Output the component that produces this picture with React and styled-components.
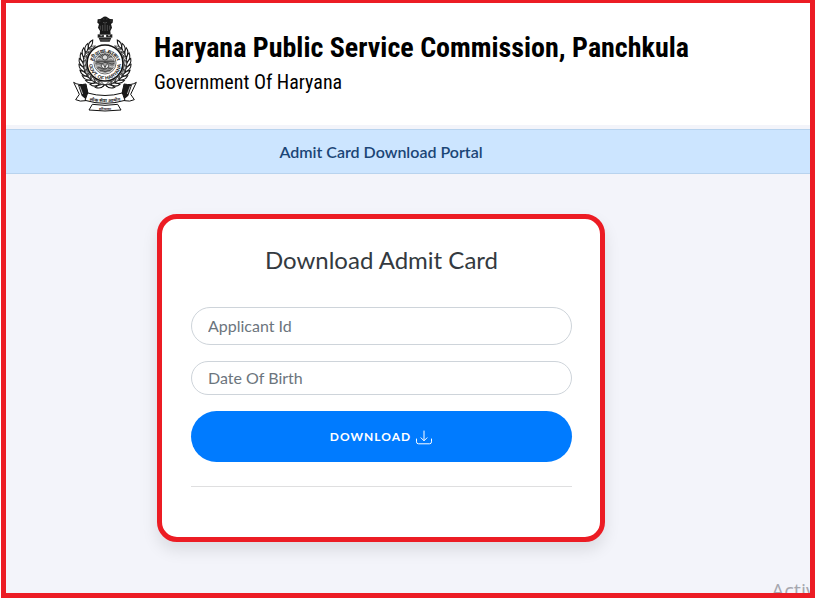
import React, { useState } from 'react';
import styled, { createGlobalStyle } from 'styled-components';

const GlobalStyle = createGlobalStyle`
  *,
  *::before,
  *::after {
    box-sizing: border-box;
  }

  body {
    margin: 0;
    background: #fff;
    font-family: Lato, sans-serif;
    font-size: 16px;
    line-height: 24px;
    color: #343a40;
  }
`;

const Frame = styled.div`
  position: relative;
  display: flex;
  flex-direction: column;
  min-height: calc(100vh - 1px);
  margin: 0 0 1px 1px;
  border: 5px solid #ec1c24;
  border-top-width: 3px;
  background: #f3f4fa;
  overflow: hidden;
`;

const Header = styled.header`
  display: flex;
  align-items: flex-start;
  gap: 17px;
  padding: 13px 67px;
  background: #fff;
`;

const Emblem = styled.svg`
  flex: none;
  width: 64px;
  height: 96px;
`;

const Titles = styled.div`
  padding-top: 14px;
  font-family: 'Roboto Condensed', Roboto, 'Liberation Sans Narrow', sans-serif;
  color: #000;
`;

const SiteName = styled.h1`
  margin: 0;
  font-size: 28px;
  font-weight: 700;
  line-height: 36px;
`;

const Government = styled.p`
  margin: 0;
  font-size: 20px;
  line-height: 32px;
`;

const Banner = styled.div`
  margin-top: 4px;
  padding: 10px 54px 9px 0;
  border: 1px solid #b8d3ee;
  border-width: 1px 0;
  background: #cce5ff;
  color: #1b4676;
  font-weight: 600;
  text-align: center;
`;

const Main = styled.main`
  display: flex;
  justify-content: center;
  padding: 40px 54px 51px 0;
`;

const Card = styled.form`
  width: 100%;
  max-width: 448px;
  padding: 23px 28px 50px 29px;
  border: 5px solid #ec1c24;
  border-radius: 20px;
  background: #fff;
  box-shadow: 0 8px 16px rgba(0, 0, 0, 0.1);
`;

const CardTitle = styled.h2`
  margin: 0 0 29px;
  font-size: 24px;
  font-weight: 400;
  line-height: 36px;
  text-align: center;
`;

const Field = styled.input`
  display: block;
  width: 100%;
  height: ${(props) => (props.$compact ? '34px' : '38px')};
  margin-bottom: 16px;
  padding: 0 16px 2px;
  border: 1px solid #ced4da;
  border-radius: 32px;
  background: #fff;
  color: #495057;
  font: inherit;
  outline: none;

  &::placeholder {
    color: #6c757d;
    opacity: 1;
  }

  &:focus {
    border-color: #80bdff;
  }
`;

const DownloadButton = styled.button`
  display: flex;
  align-items: center;
  justify-content: center;
  gap: 4px;
  width: 100%;
  height: 51px;
  border: none;
  border-radius: 80px;
  background: #007bff;
  color: #fff;
  font-family: inherit;
  font-size: 12px;
  font-weight: 700;
  letter-spacing: 1px;
  text-transform: uppercase;
  cursor: pointer;

  &:hover {
    background: #0069d9;
  }
`;

const Divider = styled.hr`
  margin: 24px 0 0;
  border: none;
  border-top: 1px solid #dfdfe0;
`;

const Watermark = styled.span`
  position: absolute;
  right: -6px;
  bottom: -12px;
  color: #a6a7ae;
  font-family: 'Open Sans', sans-serif;
  font-size: 20px;
  line-height: 28px;
`;

// half of the wreath, the other half is mirrored
const leaves = Array.from({ length: 11 }, (_, i) => 82 - i * 13);

const Branch = () => (
  <g>
    <path d="M137 244 A68 68 0 0 0 174 118" fill="none" stroke="#111" strokeWidth="2" />
    {leaves.map((angle) => (
      <g key={angle} transform={`rotate(${angle} 134 174)`}>
        <path d="M199 182 Q197 166 210 155 Q215 172 199 182Z" fill="#fff" stroke="#111" strokeWidth="3" />
        <path d="M199 180 Q189 174 191 161 Q200 168 199 180Z" fill="#fff" stroke="#111" strokeWidth="2" />
      </g>
    ))}
  </g>
);

const StateEmblem = () => (
  <Emblem viewBox="38 33 192 288" role="img" aria-label="Haryana emblem">
    <Branch />
    <g transform="translate(268 0) scale(-1 1)">
      <Branch />
    </g>

    {/* lion capital */}
    <path
      d="M126 38 Q134 31 143 38 L149 42 L158 43 L157 53 L152 57 L155 68 L150 78 L151 88 H118 L119 78 L113 68 L116 57 L111 53 L112 43 L120 42Z"
      fill="#181818"
    />
    <path d="M129 42h3M138 42h3M116 48h4M150 48h4M128 52q6 5 12 0M127 60v18M134 58v20M141 60v18M120 62v12M148 62v12" stroke="#888" strokeWidth="1.4" fill="none" />
    <path d="M112 88h44v10h-44z" fill="#222" />
    <circle cx="134" cy="93" r="4" fill="#fff" />
    <path d="M120 92h6M143 92h6" stroke="#fff" strokeWidth="2" />
    <path d="M115 99h38l-5 11h-28z" fill="#222" />
    <path d="M122 102v5M128 102v6M134 102v6M140 102v6M146 102v5" stroke="#aaa" strokeWidth="1.5" />

    <circle cx="134" cy="174" r="54" fill="#fff" stroke="#111" strokeWidth="5" />
    <circle cx="134" cy="174" r="33" fill="#fff" stroke="#222" strokeWidth="2" />
    <circle cx="134" cy="174" r="30" fill="#8c8c8c" />

    {/* lotus, water and rising sun of the seal */}
    <g fill="none" stroke="#222" strokeWidth="2">
      <circle cx="134" cy="157" r="8" fill="#ddd" />
      <path d="M114 153l8 4M117 146l8 7M151 146l-8 7M155 153l-8 4M134 145v5M125 146l4 5M143 146l-4 5" />
      <path d="M105 169h58M106 175q7-5 14 0t14 0t14 0t14 0" />
      <path d="M107 184q7-5 14 0t14 0t14 0t12 0" stroke="#eee" />
      <path d="M111 190q6-5 12 0t12 0t12 0t10 0M118 198q5-4 11 0t11 0t11 0" />
      <path d="M122 183q12-22 24 0q-12 18-24 0Z" fill="#e4e4e4" />
      <path d="M134 170v23M127 175l7 12l7-12" />
      <path d="M110 163q7-7 14 0M144 163q7-7 14 0" stroke="#fff" />
    </g>

    <defs>
      <path id="ring-top" d="M95 182 A39 39 0 1 1 173 182" />
      <path id="ring-bottom" d="M86 176 A48 48 0 0 0 182 176" />
      <path id="ribbon" d="M78 285 Q134 298 190 285" />
    </defs>
    <g fill="#111" fontWeight="700" textAnchor="middle" opacity="0.95" fontFamily="'Noto Sans', sans-serif">
      <text fontSize="15">
        <textPath href="#ring-top" startOffset="50%">हरियाणा सरकार</textPath>
      </text>
      <text fontSize="15" fontFamily="'Liberation Sans', sans-serif">
        <textPath href="#ring-bottom" startOffset="50%">GOVT. OF HARYANA</textPath>
      </text>
    </g>

    {/* ribbon */}
    <path d="M40 232 Q54 242 77 237 L82 263 L76 287 Q59 291 46 284 L57 268Z" fill="#fff" stroke="#111" strokeWidth="3" />
    <path d="M228 232 Q214 242 191 237 L186 263 L192 287 Q209 291 222 284 L211 268Z" fill="#fff" stroke="#111" strokeWidth="3" />
    <path d="M53 240l11 32l14 12l6-22l-8-25zM215 240l-11 32l-14 12l-6-22l8-25z" fill="#191919" />
    <path d="M58 243l9 24M210 243l-9 24" stroke="#fff" strokeWidth="2" />
    <path d="M82 264 Q134 279 186 264 L194 286 Q134 304 74 286Z" fill="#fff" stroke="#111" strokeWidth="3" />
    <path d="M96 298 Q134 304 172 298 L182 315 Q134 321 86 315Z" fill="#fff" stroke="#111" strokeWidth="3" />
    <g fill="#111" fontWeight="700" textAnchor="middle" opacity="0.95" fontFamily="'Noto Sans', sans-serif">
      <text fontSize="14">
        <textPath href="#ribbon" startOffset="50%">लोक सेवा आयोग</textPath>
      </text>
      <text x="134" y="314" fontSize="11">हरियाणा</text>
    </g>
  </Emblem>
);

const DownloadIcon = () => (
  <svg width="18" height="18" viewBox="0 0 18 18" fill="none" stroke="currentColor" strokeLinecap="round" strokeLinejoin="round" aria-hidden="true">
    <path d="M1.5 11v2.8a2 2 0 0 0 2 2h11a2 2 0 0 0 2-2V11" />
    <path d="M9 3v9.5M6 9.8l3 3l3-3" />
  </svg>
);

const App = () => {
  const [applicantId, setApplicantId] = useState('');
  const [birthDate, setBirthDate] = useState('');

  return (
    <>
      <GlobalStyle />
      <Frame>
        <Header>
          <StateEmblem />
          <Titles>
            <SiteName>Haryana Public Service Commission, Panchkula</SiteName>
            <Government>Government Of Haryana</Government>
          </Titles>
        </Header>

        <Banner>Admit Card Download Portal</Banner>

        <Main>
          <Card onSubmit={(e) => e.preventDefault()}>
            <CardTitle>Download Admit Card</CardTitle>
            <Field
              type="text"
              aria-label="Applicant Id"
              placeholder="Applicant Id"
              value={applicantId}
              onChange={(e) => setApplicantId(e.target.value)}
            />
            <Field
              $compact
              type="text"
              aria-label="Date Of Birth"
              placeholder="Date Of Birth"
              value={birthDate}
              onChange={(e) => setBirthDate(e.target.value)}
            />
            <DownloadButton type="submit">
              Download
              <DownloadIcon />
            </DownloadButton>
            <Divider />
          </Card>
        </Main>

        <Watermark>Activ</Watermark>
      </Frame>
    </>
  );
};

export default App;
